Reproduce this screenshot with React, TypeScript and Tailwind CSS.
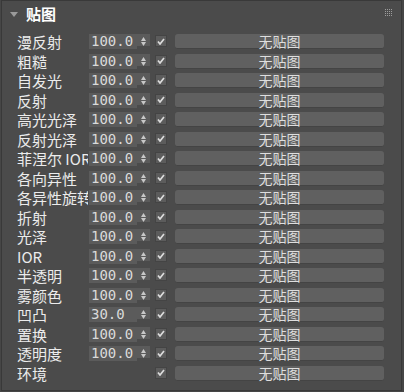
import React from 'react';

interface MapRow {
  label: string;
  value?: string;
}

const rows: MapRow[] = [
  { label: '漫反射', value: '100.0' },
  { label: '粗糙', value: '100.0' },
  { label: '自发光', value: '100.0' },
  { label: '反射', value: '100.0' },
  { label: '高光光泽', value: '100.0' },
  { label: '反射光泽', value: '100.0' },
  { label: '菲涅尔 IOR', value: '100.0' },
  { label: '各向异性', value: '100.0' },
  { label: '各异性旋转', value: '100.0' },
  { label: '折射', value: '100.0' },
  { label: '光泽', value: '100.0' },
  { label: 'IOR', value: '100.0' },
  { label: '半透明', value: '100.0' },
  { label: '雾颜色', value: '100.0' },
  { label: '凹凸', value: '30.0' },
  { label: '置换', value: '100.0' },
  { label: '透明度', value: '100.0' },
  { label: '环境' },
];

const cjk = { fontFamily: '"Noto Sans CJK SC", "Noto Sans", sans-serif' };

const Grip = () => (
  <svg width="8" height="8" viewBox="0 0 8 8" className="block">
    {[0, 2, 4, 6].map(y =>
      [0, 2, 4, 6].map(x => <rect key={`${x}-${y}`} x={x} y={y} width="1" height="1" fill="#9c9c9c" />)
    )}
  </svg>
);

const Spinner = ({ value }: { value: string }) => (
  <div className="flex items-start w-[61px] h-[15px]">
    <div
      className="w-[48px] h-[15px] bg-[#5b5b5b] text-[#dadada] text-[14px] leading-[15px] pl-[2px]"
      style={{ fontFamily: '"DejaVu Sans Mono", monospace' }}
    >
      {value}
    </div>
    <div className="w-[13px] h-[12px] bg-[#5b5b5b] flex flex-col items-center justify-center gap-[1px] pt-[3px]">
      <svg width="5" height="4" viewBox="0 0 5 4" className="block">
        <polygon points="2.5,0 5,4 0,4" fill="#c8c8c8" />
      </svg>
      <svg width="5" height="4" viewBox="0 0 5 4" className="block">
        <polygon points="0,0 5,0 2.5,4" fill="#c8c8c8" />
      </svg>
    </div>
  </div>
);

const Check = () => (
  <div className="w-[12px] h-[12px] bg-[#5c5c5c] border border-[#444] flex items-center justify-center">
    <svg width="8" height="7" viewBox="0 0 8 7" className="block">
      <path d="M1 3.5 L3 6 L7 1" stroke="#dcdcdc" strokeWidth="1.7" fill="none" />
    </svg>
  </div>
);

export default function App() {
  return (
    <div className="w-[404px] h-[392px] bg-[#464646] pl-[1px]">
      <div className="w-[401px] h-[391px] bg-[#4b4b4b] border border-[#393939] flex flex-col">
        <div className="h-[26px] flex items-center pl-[8px] pr-[8px]">
          <svg width="8" height="5" viewBox="0 0 8 5" className="block">
            <polygon points="0,0 8,0 4,5" fill="#9a9a9a" />
          </svg>
          <span className="ml-[8px] text-white text-[15px] font-bold leading-[20px]" style={cjk}>
            贴图
          </span>
          <div className="ml-auto -mt-[2px]">
            <Grip />
          </div>
        </div>
        <div className="flex flex-col pt-[7px]">
          {rows.map(row => (
            <div key={row.label} className="h-[19.5px] flex items-start">
              <div
                className="w-[71px] h-[19px] ml-[15px] -mt-[2px] overflow-hidden whitespace-nowrap text-[15px] leading-[19px] text-[#ececec]"
                style={cjk}
              >
                {row.label}
              </div>
              <div className="w-[61px] ml-[1px]">{row.value && <Spinner value={row.value} />}</div>
              <div className="ml-[5px] mt-[1px]">
                <Check />
              </div>
              <div
                className="ml-[8px] w-[209px] h-[15px] rounded-[3px] bg-[#606060] border-b border-[#444] text-center text-[14px] leading-[14px] text-[#dedede]"
                style={cjk}
              >
                无贴图
              </div>
            </div>
          ))}
        </div>
      </div>
    </div>
  );
}
